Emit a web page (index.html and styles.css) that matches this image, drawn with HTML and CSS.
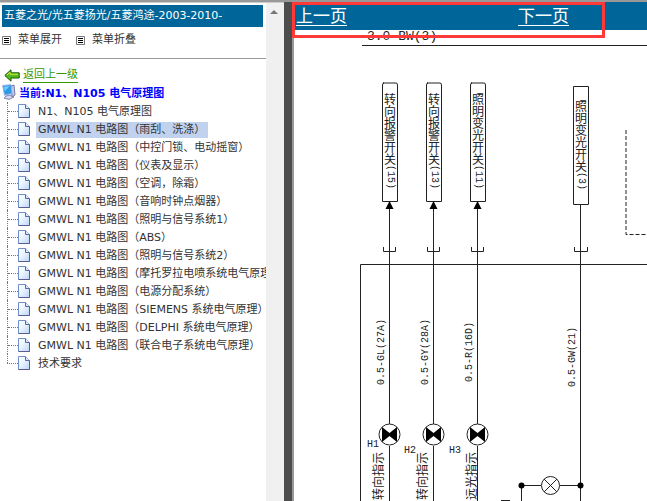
FILE: index.html
```html
<!DOCTYPE html>
<html lang="zh-CN">
<head>
<meta charset="utf-8">
<title>N1、N105 电气原理图</title>
<link rel="stylesheet" href="styles.css">
</head>
<body>
<svg class="defs" aria-hidden="true">
  <defs>
    <linearGradient id="paper" x1="0" y1="0" x2="1" y2="1">
      <stop offset="0" stop-color="#fff"/><stop offset=".4" stop-color="#eef6ff"/><stop offset="1" stop-color="#b9d4f8"/>
    </linearGradient>
    <symbol id="page" viewBox="0 0 12 14">
      <path d="M.5.5H7.5L11.500 4.500V13.500H.5Z" fill="url(#paper)" stroke="#6f8fd0"/>
      <path d="M.5 13.500H11.500V4.500" fill="none" stroke="#5a5c96"/>
      <path d="M7.5.5V4.500H11.500" fill="#dbe8fb" stroke="#5868ac"/>
    </symbol>
    <symbol id="list" viewBox="0 0 9 9">
      <path d="M.5.5H8.5V8.5H.5Z" fill="#fff" stroke="#777"/>
      <path d="M2 2.5H7M2 4.5H7M2 6.5H7" stroke="#000"/>
    </symbol>
  </defs>
</svg>
<div class="frames">
  <aside class="menu">
    <div class="menu-body">
      <h1 class="title">五菱之光/光五菱扬光/五菱鸿途-2003-2010-</h1>
      <div class="tools">
        <button type="button"><svg width="9" height="9"><use href="#list"/></svg>菜单展开</button>
        <button type="button"><svg width="9" height="9"><use href="#list"/></svg>菜单折叠</button>
      </div>
      <a class="back" href="#"><svg width="16" height="13" viewBox="0 0 16 13"><path d="M7 .8V3.8H15.2V9H7V12.2L.8 6.5Z" fill="#55b81c" stroke="#185a08"/><path d="M3 6L6 3.2V5.2H14" fill="none" stroke="#d8ee3c"/></svg><span>返回上一级</span></a>
      <div class="current"><svg width="14" height="16" viewBox="0 0 14 16"><path d="M4 12L8 11L12 13L7 15.5L2 14Z" fill="#d5d8ed" stroke="#8187b5"/><path d="M9 2L12 1L13 11L10 13Z" fill="#c4c8e6" stroke="#757bad"/><path d="M.7 1.5L9 .7L10 9.5L2.5 11.3Z" fill="#299be8" stroke="#9aafe0"/><path d="M2 2.8L7.5 2.2L3 7Z" fill="#75d0ff"/></svg><span>当前:N1、N105 电气原理图</span></div>
      <ul class="tree">
        <li><svg><use href="#page"/></svg><a href="#">N1、N105 电气原理图</a></li>
        <li><svg><use href="#page"/></svg><a href="#" class="selected">GMWL N1 电路图（雨刮、洗涤）</a></li>
        <li><svg><use href="#page"/></svg><a href="#">GMWL N1 电路图（中控门锁、电动摇窗）</a></li>
        <li><svg><use href="#page"/></svg><a href="#">GMWL N1 电路图（仪表及显示）</a></li>
        <li><svg><use href="#page"/></svg><a href="#">GMWL N1 电路图（空调，除霜）</a></li>
        <li><svg><use href="#page"/></svg><a href="#">GMWL N1 电路图（音响时钟点烟器）</a></li>
        <li><svg><use href="#page"/></svg><a href="#">GMWL N1 电路图（照明与信号系统1）</a></li>
        <li><svg><use href="#page"/></svg><a href="#">GMWL N1 电路图（ABS）</a></li>
        <li><svg><use href="#page"/></svg><a href="#">GMWL N1 电路图（照明与信号系统2）</a></li>
        <li><svg><use href="#page"/></svg><a href="#">GMWL N1 电路图（摩托罗拉电喷系统电气原理）</a></li>
        <li><svg><use href="#page"/></svg><a href="#">GMWL N1 电路图（电源分配系统）</a></li>
        <li><svg><use href="#page"/></svg><a href="#">GMWL N1 电路图（SIEMENS 系统电气原理）</a></li>
        <li><svg><use href="#page"/></svg><a href="#">GMWL N1 电路图（DELPHI 系统电气原理）</a></li>
        <li><svg><use href="#page"/></svg><a href="#">GMWL N1 电路图（联合电子系统电气原理）</a></li>
        <li><svg><use href="#page"/></svg><a href="#">技术要求</a></li>
      </ul>
    </div>
    <div class="scrollbar"><svg width="8" height="4" viewBox="0 0 8 4"><path d="M0 4L4 0L8 4Z" fill="#777"/></svg></div>
  </aside>
  <main class="viewer">
    <nav class="pager"><a href="#">上一页</a><a href="#">下一页</a></nav>
    <div class="marker"></div>
    <div class="sheet">
      <svg width="353" height="471" viewBox="294 30 353 471" role="img" aria-label="电路图">
        <g class="latin big"><text x="367" y="40">3.0 BW(3)</text></g>
        <path class="line" d="M362 45.5H647"/>
        <g class="line">
          <path d="M383 83H396Q397.500 83 397.500 85V201.500H382.500V85Q382.500 83 384 83Z"/>
          <path d="M427 83H440Q441.500 83 441.500 85V201.500H426.500V85Q426.500 83 428 83Z"/>
          <path d="M471 83H484Q485.500 83 485.500 85V201.500H470.500V85Q470.500 83 472 83Z"/>
          <path d="M573.500 86.500H588.500V204.500H573.500Z"/>
          <path d="M389.500 206V424M433.500 206V424M477.500 206V424M389.500 446V501M433.500 446V501M477.500 446V501M580.500 205V501"/>
          <path d="M360.500 501V264.500H647"/>
          <path d="M383.500 247V251.500H395.500V247M427.500 247V251.500H439.500V247M471.500 247V251.500H483.500V247M574.500 247V251.500H587.500V247"/>
          <path d="M521.500 501V485.500H541M560 485.500H580"/>
          <circle cx="389.500" cy="434.500" r="10.500"/><circle cx="433.500" cy="434.500" r="10.500"/><circle cx="477.500" cy="434.500" r="10.500"/>
          <circle cx="550.500" cy="485.500" r="9"/><path d="M544 479L557 492M557 479L544 492"/>
          <path class="dash" d="M626 130V234.500H647"/>
        </g>
        <g>
          <path d="M389.500 201L393.500 209H385.500ZM433.500 201L437.500 209H429.500ZM477.500 201L481.500 209H473.500Z"/>
          <path id="bow" d="M382 427L389.500 433L397 427V442L389.500 436L382 442Z"/>
          <use href="#bow" x="44"/><use href="#bow" x="88"/>
          <circle cx="521.500" cy="485.500" r="3"/><circle cx="580.500" cy="485.500" r="3"/>
        </g>
        <g class="stack">
          <text x="390" y="93">转向报警开关<tspan>(15)</tspan></text>
          <text x="434" y="93">转向报警开关<tspan>(13)</tspan></text>
          <text x="478" y="93">照明变光开关<tspan>(11)</tspan></text>
          <text x="581" y="100">照明变光开关<tspan>(3)</tspan></text>
        </g>
        <g class="latin">
          <text transform="translate(384 385) rotate(-90)">0.5-GL(27A)</text>
          <text transform="translate(428 385) rotate(-90)">0.5-GY(28A)</text>
          <text transform="translate(472 382) rotate(-90)">0.5-R(16D)</text>
          <text transform="translate(575 387) rotate(-90)">0.5-GW(21)</text>
          <text x="367" y="447">H1</text><text x="404" y="453">H2</text><text x="449" y="453">H3</text>
        </g>
        <g class="up">
          <text transform="translate(383 500) rotate(-90)">转向指示</text>
          <text transform="translate(427 500) rotate(-90)">转向指示</text>
          <text transform="translate(476 500) rotate(-90)">远光指示</text>
        </g>
        <path class="line" d="M501 500.500H510"/>
      </svg>
    </div>
  </main>
</div>
</body>
</html>
```
FILE: styles.css
```css
* { box-sizing: border-box; }
body {
  margin: 0;
  background: #fff;
  color: #333;
  font: 11px/18px "DejaVu Sans", "Noto Sans CJK SC", sans-serif;
}
.defs { position: absolute; width: 0; height: 0; }
.frames {
  display: flex;
  height: 100vh;
  border-top: 2px solid #999;
  overflow: hidden;
}
.menu {
  display: flex;
  flex: 0 0 284px;
  min-width: 0;
  border-top: 1px solid #ccc;
}
.menu-body { flex: 1; min-width: 0; overflow: hidden; padding-top: 2px; }
.title {
  margin: 0 3px 0 2px;
  padding: 0 2px;
  background: #006699;
  color: #fff;
  font-size: 11px;
  font-weight: normal;
  line-height: 22px;
  white-space: nowrap;
}
.tools {
  display: flex;
  gap: 14px;
  height: 32px;
  padding: 4px 2px 0;
  border-bottom: 1px solid #999;
}
.tools button {
  display: flex;
  align-items: center;
  gap: 7px;
  height: 18px;
  padding: 0;
  border: 0;
  background: none;
  color: inherit;
  font: inherit;
}
.back {
  display: flex;
  align-items: center;
  gap: 3px;
  height: 18px;
  margin: 7px 0 0 4px;
  color: #390;
  text-decoration: none;
}
.back span { line-height: 14px; border-bottom: 1px solid #390; }
.current {
  display: flex;
  gap: 3px;
  height: 18px;
  padding-left: 2px;
  color: #00f;
  font-weight: bold;
  line-height: 20px;
  white-space: nowrap;
}
.tree {
  margin: 0 0 0 7px;
  padding: 0;
  list-style: none;
}
.tree li {
  display: flex;
  align-items: center;
  height: 18px;
  border-left: 1px dotted #777;
  white-space: nowrap;
}
.tree li::before { content: ""; flex: none; width: 10px; border-top: 1px dotted #777; }
.tree li:last-child {
  border-left: 0;
  background: repeating-linear-gradient(#777 0 1px, transparent 1px 2px) 0 0 / 1px 9px no-repeat;
}
.tree li:last-child::before { width: 11px; }
.tree svg { flex: none; width: 12px; height: 14px; }
.tree a {
  margin: 2px 0 0 6px;
  padding: 0 3px 0 2px;
  color: inherit;
  line-height: 16px;
  text-decoration: none;
}
.tree .selected { background: #c1d2ee; }
.scrollbar {
  flex: 0 0 18px;
  padding: 7px 0 0 4px;
  background: #f0f0f0;
  line-height: 0;
}
.viewer {
  position: relative;
  display: flex;
  flex: 1;
  flex-direction: column;
  min-width: 0;
  border-left: 8px solid #4d4d4d;
  box-shadow: inset 2px 0 #999;
  padding-left: 2px;
}
.pager {
  display: flex;
  flex: 0 0 28px;
  gap: 171px;
  padding: 0 2px;
  background: #006699;
}
.pager a {
  color: #fff;
  font: 17px/26px "Noto Sans CJK SC", sans-serif;
  text-underline-offset: 3px;
}
.marker {
  position: absolute;
  top: 0;
  left: 0;
  width: 313px;
  height: 36px;
  border: 3px solid #ff3838;
}
.sheet { flex: 1; overflow: hidden; }
.sheet svg { display: block; }
.line { fill: none; stroke: #222; stroke-width: 1; }
.dash { stroke-dasharray: 4 2; stroke-width: 2; }
.line .dash { stroke-width: 1; }
.latin { font: 10px "Liberation Mono", monospace; fill: #222; }
.big { font-size: 13px; }
.stack {
  font: 12px "Noto Sans CJK SC", sans-serif;
  fill: #222;
  writing-mode: vertical-rl;
}
.stack tspan { font: 10px "Liberation Mono", monospace; }
.up { font: 12px "Noto Sans CJK SC", sans-serif; fill: #222; }
```
